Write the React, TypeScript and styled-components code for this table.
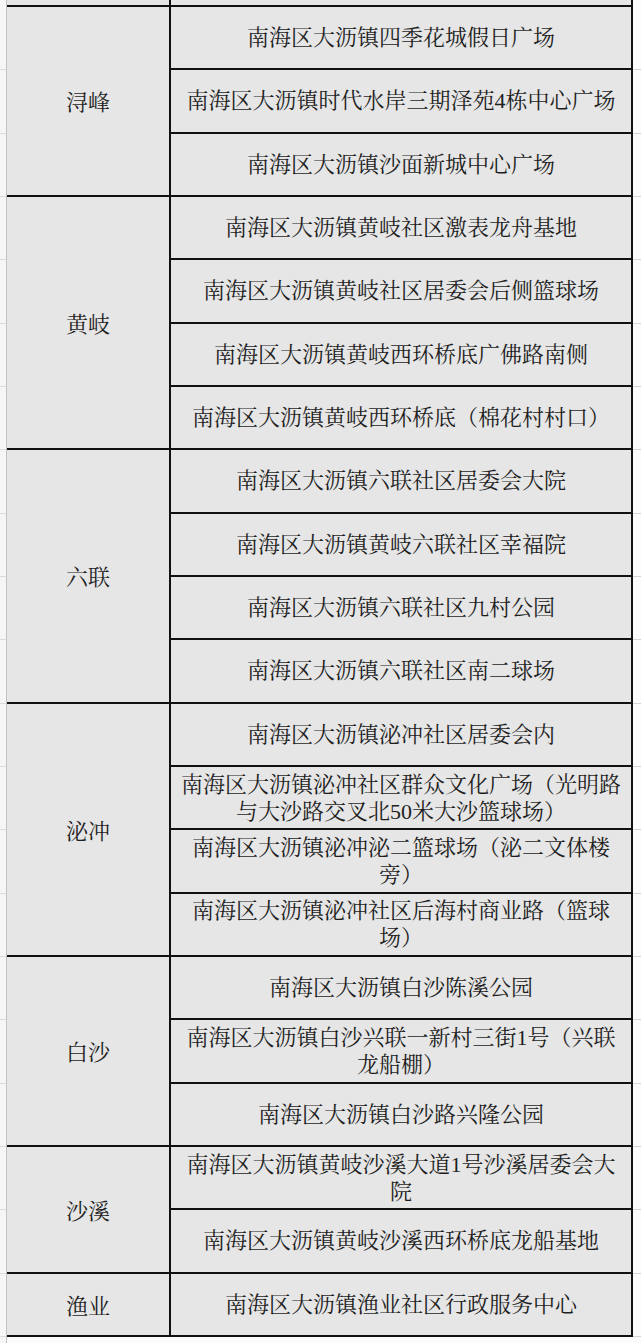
import * as React from 'react';
import styled, { createGlobalStyle } from 'styled-components';

const GlobalStyle = createGlobalStyle`
  html, body {
    margin: 0;
    padding: 0;
    background: #fbfbfb;
  }
  * {
    box-sizing: border-box;
  }
`;

const ROW_H = 61.33;

const Page = styled.div`
  display: flex;
  width: 641px;
  height: 1343px;
  overflow: hidden;
  font-family: 'Liberation Serif', 'Noto Serif CJK SC', 'Noto Sans CJK SC', serif;
  color: #1e1e1e;
`;

const LeftGutter = styled.div`
  width: 7px;
  flex: none;
  background-color: #f6f6f6;
  border-right: 1px solid #c4c4c4;
  background-image: repeating-linear-gradient(
    to bottom,
    transparent 0,
    transparent 62.33px,
    #dcdcdc 62.33px,
    #dcdcdc 63.33px
  );
  background-position: 0 7px;
`;

const RightGutter = styled.div`
  flex: 1;
  background-color: #fcfcfc;
  background-image: repeating-linear-gradient(
    to bottom,
    transparent 0,
    transparent 62.33px,
    #d6d6d6 62.33px,
    #d6d6d6 63.33px
  );
  background-position: 0 7px;
`;

const Middle = styled.div`
  display: flex;
  flex-direction: column;
  width: 626px;
  flex: none;
`;

const Table = styled.div`
  display: flex;
  flex-direction: column;
  gap: 2px;
  background: #111;
  border-right: 2px solid #111;
  border-bottom: 2px solid #111;
`;

const BottomFill = styled.div`
  flex: 1;
  background: #fcfcfc;
`;

const Group = styled.div<{ $h?: number }>`
  display: grid;
  grid-template-columns: 162px 460px;
  column-gap: 2px;
  ${(p) => (p.$h !== undefined ? `height: ${p.$h}px;` : '')}
`;

const NameCell = styled.div`
  display: flex;
  align-items: center;
  justify-content: center;
  background: #e6e6e6;
  font-size: 22px;
`;

const ItemList = styled.div`
  display: flex;
  flex-direction: column;
  gap: 2px;
`;

const ItemCell = styled.div`
  height: ${ROW_H}px;
  display: flex;
  align-items: center;
  justify-content: center;
  padding: 0 8px;
  background: #e6e6e6;
  font-size: 22px;
  line-height: 27px;
  text-align: center;
`;

const Blank = styled.div`
  background: #e6e6e6;
`;

const groups = [
  {
    name: '浔峰',
    items: [
      '南海区大沥镇四季花城假日广场',
      '南海区大沥镇时代水岸三期泽苑4栋中心广场',
      '南海区大沥镇沙面新城中心广场',
    ],
  },
  {
    name: '黄岐',
    items: [
      '南海区大沥镇黄岐社区激表龙舟基地',
      '南海区大沥镇黄岐社区居委会后侧篮球场',
      '南海区大沥镇黄岐西环桥底广佛路南侧',
      '南海区大沥镇黄岐西环桥底（棉花村村口）',
    ],
  },
  {
    name: '六联',
    items: [
      '南海区大沥镇六联社区居委会大院',
      '南海区大沥镇黄岐六联社区幸福院',
      '南海区大沥镇六联社区九村公园',
      '南海区大沥镇六联社区南二球场',
    ],
  },
  {
    name: '泌冲',
    items: [
      '南海区大沥镇泌冲社区居委会内',
      '南海区大沥镇泌冲社区群众文化广场（光明路与大沙路交叉北50米大沙篮球场）',
      '南海区大沥镇泌冲泌二篮球场（泌二文体楼旁）',
      '南海区大沥镇泌冲社区后海村商业路（篮球场）',
    ],
  },
  {
    name: '白沙',
    items: [
      '南海区大沥镇白沙陈溪公园',
      '南海区大沥镇白沙兴联一新村三街1号（兴联龙船棚）',
      '南海区大沥镇白沙路兴隆公园',
    ],
  },
  {
    name: '沙溪',
    items: [
      '南海区大沥镇黄岐沙溪大道1号沙溪居委会大院',
      '南海区大沥镇黄岐沙溪西环桥底龙船基地',
    ],
  },
  {
    name: '渔业',
    items: ['南海区大沥镇渔业社区行政服务中心'],
  },
];

export default function App() {
  return (
    <>
      <GlobalStyle />
      <Page>
        <LeftGutter />
        <Middle>
          <Table>
            {/* 上一行的残留部分 */}
            <Group $h={5}>
              <Blank />
              <Blank />
            </Group>
            {groups.map((g) => (
              <Group key={g.name}>
                <NameCell>{g.name}</NameCell>
                <ItemList>
                  {g.items.map((it) => (
                    <ItemCell key={it}>{it}</ItemCell>
                  ))}
                </ItemList>
              </Group>
            ))}
          </Table>
          <BottomFill />
        </Middle>
        <RightGutter />
      </Page>
    </>
  );
}
